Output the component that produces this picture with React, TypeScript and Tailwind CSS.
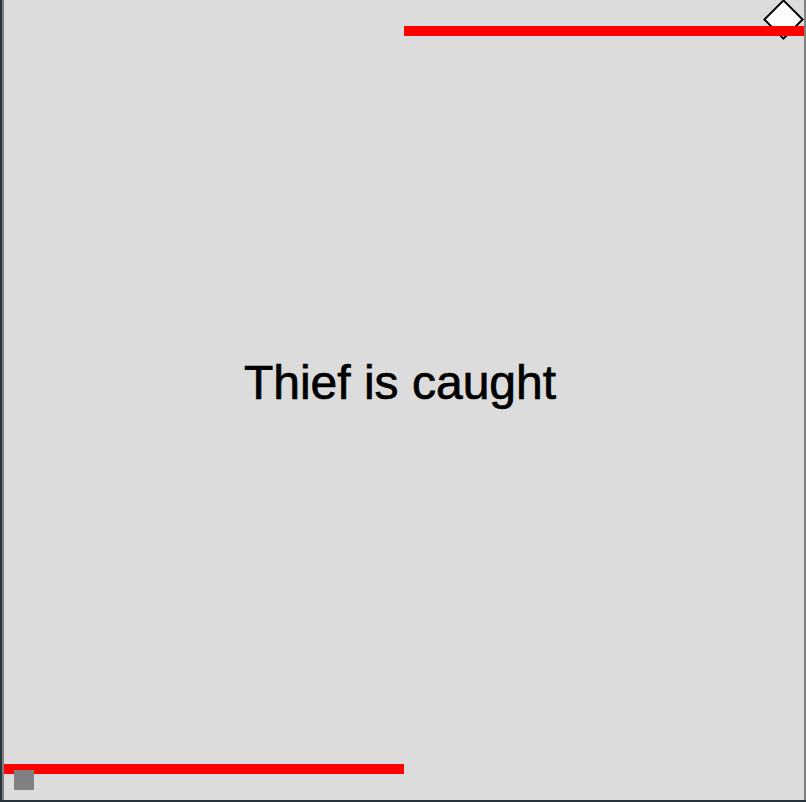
import React from 'react';

// Game view: the thief (grey square) and the guard (diamond) on a board
const App: React.FC = () => {
    return (
        <div className="w-[806px] h-[802px] bg-[#27343e] overflow-hidden">
            <div className="ml-[2px] w-[804px] h-[800px] border-x-2 border-[#808080] bg-[#dcdcdc]">
                <div className="relative w-[800px] h-[800px] flex flex-col">
                    <div className="mt-[26px] ml-[400px] w-[400px] h-[10px] bg-[#ff0000] relative z-10" />
                    <div
                        className="mt-[323px] w-[792px] h-[48px] leading-[48px] text-[48px] text-center text-black [-webkit-text-stroke:0.7px_black]"
                        style={{ fontFamily: '"Liberation Sans", Arial, sans-serif' }}
                    >
                        Thief is caught
                    </div>
                    <div className="mt-[357px] w-[400px] h-[10px] bg-[#ff0000]" />

                    {/* guard */}
                    <div className="absolute left-[765px] top-[5px] w-[29px] h-[29px] rotate-45 bg-white border-2 border-black" />
                    {/* thief */}
                    <div className="absolute left-[10px] top-[770px] w-[20px] h-[20px] bg-[#808080] z-20" />
                </div>
            </div>
        </div>
    );
};

export default App;
